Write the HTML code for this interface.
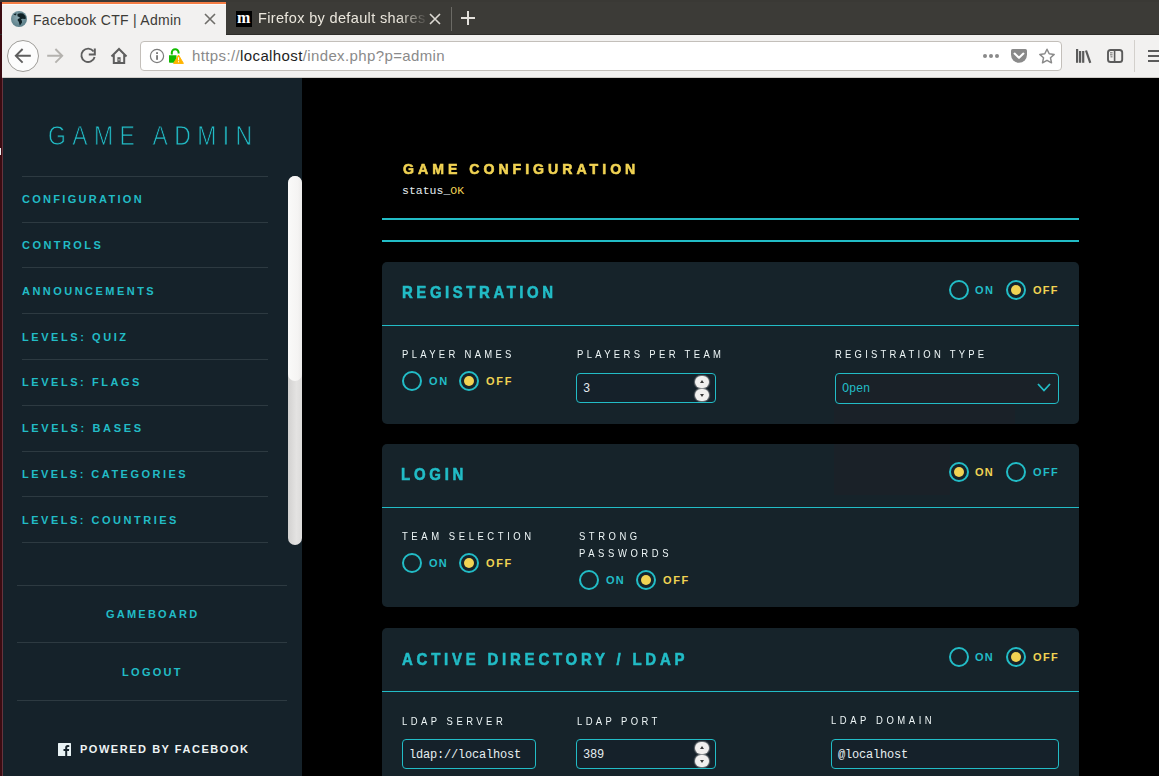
<!DOCTYPE html>
<html><head><meta charset="utf-8"><title>Facebook CTF | Admin</title>
<style>
*{margin:0;padding:0;box-sizing:border-box}
html,body{width:1159px;height:776px;overflow:hidden;background:#000;font-family:"Liberation Sans",sans-serif}
.a{position:absolute}
.t{position:absolute;white-space:nowrap;line-height:1}
/* chrome */
#tabs{left:0;top:0;width:1159px;height:35px;background:#3c3b37}
#navbar{left:0;top:35px;width:1159px;height:43px;background:#f2f1f0;border-bottom:1px solid #cfccc8}
/* sidebar */
#side{left:2px;top:78px;width:300px;height:698px;background:#15222a}
.nl{position:absolute;left:22px;width:246px;height:1px;background:#2d3a41}
.bl{position:absolute;left:17px;width:270px;height:1px;background:#2d3a41}
.nav{position:absolute;left:22px;font-weight:bold;font-size:11px;color:#22bcc6;letter-spacing:2.6px;white-space:nowrap;line-height:1}
.teal{color:#22bcc6}
.yel{color:#f1d353}
.panel{position:absolute;left:382px;width:697px;background:#16232a;border-radius:5px;overflow:hidden}
.ph{position:absolute;left:20px;transform:scaleX(0.88);transform-origin:0 0;-webkit-text-stroke:0.6px #22bcc6;font-weight:bold;font-size:17px;color:#22bcc6;letter-spacing:4px;white-space:nowrap;line-height:1}
.hl{position:absolute;left:0;width:697px;height:1px;background:#22bcc6}
.lab{position:absolute;transform:scaleX(0.86);transform-origin:0 0;font-size:11px;color:#eef6f7;letter-spacing:2.6px;white-space:nowrap;line-height:1}
.rad{position:absolute;width:20px;height:20px;border:2.5px solid #22bcc6;border-radius:50%}
.rad.on::after{content:"";position:absolute;left:2.5px;top:2.5px;width:10px;height:10px;border-radius:50%;background:#f1d353}
.rl{position:absolute;font-weight:bold;font-size:11px;letter-spacing:2px;white-space:nowrap;line-height:1}
.inp{position:absolute;height:30px;border:1px solid #22bcc6;border-radius:4px;background:#15212a}
.mono{font-family:"Liberation Mono",monospace}
.itxt{position:absolute;font-family:"Liberation Mono",monospace;font-size:12px;letter-spacing:-0.2px;color:#e6eef0;white-space:nowrap;line-height:1}
.spin{position:absolute;width:14px;height:12px;border-radius:6px;background:#f1f0ef;box-shadow:0 0 1px 1px rgba(200,200,200,.5)}
.spin.up::after{content:"";position:absolute;left:4.5px;top:4px;border-left:2.5px solid transparent;border-right:2.5px solid transparent;border-bottom:3px solid #3a3a3a}
.spin.dn::after{content:"";position:absolute;left:4.5px;top:4.5px;border-left:2.5px solid transparent;border-right:2.5px solid transparent;border-top:3px solid #3a3a3a}
</style></head><body>
<!-- ============ BROWSER CHROME ============ -->
<div id="tabs" class="a"></div>
<div class="a" style="left:0;top:0;width:1159px;height:2px;background:#3a3935"></div>
<!-- active tab -->
<div class="a" style="left:2px;top:2px;width:224px;height:33px;background:#f2f1f0"></div>
<div class="a" style="left:2px;top:2px;width:224px;height:2px;background:#f47d45"></div>
<div class="a" style="left:2px;top:4px;width:224px;height:1px;background:#fbfbfa"></div>
<!-- navbar -->
<div id="navbar" class="a"></div>
<div class="a" style="left:0;top:2px;width:2px;height:774px;background:#3b0b11"></div>
<!-- tab 1 content -->
<svg class="a" style="left:10px;top:10px" width="18" height="18" viewBox="0 0 18 18">
 <defs><radialGradient id="gg" cx="45%" cy="40%" r="60%"><stop offset="0" stop-color="#8eaab2"/><stop offset="1" stop-color="#5a7e88"/></radialGradient></defs>
 <circle cx="9" cy="9" r="8" fill="url(#gg)"/>
 <path d="M3.5 4.5 Q5 3.2 6.5 3.6 L6 5.2 Q4.6 5.6 3.5 4.5Z" fill="#14282e"/>
 <path d="M7.5 4 Q10 2.6 13 3.6 Q15.8 5.6 16 8.6 Q14.8 9.4 13.2 8.8 Q11.8 8.4 11 9.6 Q12.4 10.4 12 12.6 Q10.8 14.8 9.8 15.4 Q9.2 13.6 8.8 11.8 Q7.4 10.8 7.6 9.4 Q8.6 8.2 10.2 8 Q9.2 6.6 7.5 6.2 Z" fill="#0f2126"/>
</svg>
<div id="tt1" class="t" style="left:33.00px;top:13.00px;font-size:14px;letter-spacing:0.27px;color:#3c3b37">Facebook CTF | Admin</div>
<svg class="a" style="left:204px;top:13px" width="12" height="12" viewBox="0 0 12 12"><path d="M1 1L11 11M11 1L1 11" stroke="#6e6d69" stroke-width="1.6"/></svg>
<!-- tab 2 -->
<div class="a" style="left:236px;top:11px;width:16px;height:16px;background:#000"></div>
<div class="t" style="left:237px;top:10px;font-family:'Liberation Serif',serif;font-weight:bold;font-size:16px;color:#fff;letter-spacing:-0.5px">m</div>
<div id="tt2" class="t" style="left:258px;top:11px;font-size:14.5px;letter-spacing:0.35px;color:#ebe7dd;-webkit-mask-image:linear-gradient(90deg,#000 0,#000 140px,rgba(0,0,0,0.15) 166px)">Firefox by default shares</div>
<svg class="a" style="left:429px;top:13px" width="12" height="12" viewBox="0 0 12 12"><path d="M1 1L11 11M11 1L1 11" stroke="#dcd9d3" stroke-width="1.6"/></svg>
<div class="a" style="left:451px;top:7px;width:1px;height:24px;background:#6b6a65"></div>
<svg class="a" style="left:460px;top:10px" width="16" height="16" viewBox="0 0 16 16"><path d="M8 1V15M1 8H15" stroke="#e4e1dc" stroke-width="2"/></svg>
<div class="a" style="left:0;top:34px;width:1159px;height:1px;background:#2e2d2a"></div>
<div class="a" style="left:2px;top:34px;width:224px;height:1px;background:#f2f1f0"></div>
<!-- nav buttons -->
<svg class="a" style="left:0;top:36px" width="140" height="42" viewBox="0 36 140 42">
 <circle cx="23" cy="56" r="15.5" fill="#fcfcfc" stroke="#9e9c98" stroke-width="1"/>
 <path d="M15.8 55.8H30.8M22.6 49L15.8 55.8L22.6 62.6" fill="none" stroke="#5e5e5e" stroke-width="1.9" stroke-linecap="butt" stroke-linejoin="miter"/>
 <path d="M47.2 55.8H62.2M55.4 49L62.2 55.8L55.4 62.6" fill="none" stroke="#b4b2ae" stroke-width="1.9"/>
 <path d="M93.6 51.5A6.7 6.7 0 1 0 94.6 57" fill="none" stroke="#5e5e5e" stroke-width="1.9"/>
 <path d="M94.8 48.6V54.6H88.8" fill="none" stroke="#5e5e5e" stroke-width="2"/>
 <path d="M111.5 56.5L119 49L126.5 56.5" fill="none" stroke="#5e5e5e" stroke-width="2"/>
 <path d="M113.8 55V63H124.2V55" fill="none" stroke="#5e5e5e" stroke-width="2"/>
 <rect x="117.4" y="57.2" width="3.2" height="5.8" fill="#5e5e5e"/><rect x="118.5" y="59" width="1" height="1.6" fill="#ddd"/>
</svg>
<!-- url box -->
<div class="a" style="left:140px;top:41px;width:922px;height:30px;background:#fff;border:1px solid #c3bfba;border-radius:4px"></div>
<svg class="a" style="left:140px;top:40px" width="50" height="32" viewBox="140 40 50 32">
 <circle cx="157" cy="56" r="6.6" fill="none" stroke="#7c7c7c" stroke-width="1.2"/>
 <rect x="156.1" y="52.2" width="1.9" height="1.8" fill="#7c7c7c"/>
 <rect x="156.1" y="55.2" width="1.9" height="4.6" fill="#7c7c7c"/>
 <path d="M171.8 54.5V52.6A3.4 3.4 0 0 1 178.6 52.6V53.4" fill="none" stroke="#12bc00" stroke-width="2"/>
 <path d="M169 55.2H176.5V62.8H169.8A0.8 0.8 0 0 1 169 62Z" fill="#12bc00"/>
 <path d="M178.5 55L183.4 63.4H173.6Z" fill="#ffb400" stroke="#ffb400" stroke-width="1" stroke-linejoin="round"/>
 <rect x="178" y="57.3" width="1.1" height="3" fill="#fff"/>
 <rect x="178" y="61.2" width="1.1" height="1.1" fill="#fff"/>
</svg>
<div id="url" class="t" style="left:192.00px;top:48.00px;font-size:15px;letter-spacing:0.38px;color:#8a8a8a">https://<span style="color:#1e1e1e">localhost</span>/index.php?p=admin</div>
<svg class="a" style="left:975px;top:40px" width="184" height="38" viewBox="975 40 184 38">
 <circle cx="985" cy="56" r="2" fill="#8a8a8a"/><circle cx="991" cy="56" r="2" fill="#8a8a8a"/><circle cx="997" cy="56" r="2" fill="#8a8a8a"/>
 <path d="M1011 50.5A1.6 1.6 0 0 1 1012.6 48.9H1025.4A1.6 1.6 0 0 1 1027 50.5V54.8A8 8 0 0 1 1011 54.8Z" fill="#8a8a8a"/>
 <path d="M1014.6 53.6L1019 57.8L1023.4 53.6" fill="none" stroke="#fff" stroke-width="2.1" stroke-linecap="round" stroke-linejoin="round"/>
 <path d="M1047 49.2L1049.2 53.8L1054.2 54.4L1050.5 57.8L1051.5 62.8L1047 60.3L1042.5 62.8L1043.5 57.8L1039.8 54.4L1044.8 53.8Z" fill="none" stroke="#8a8a8a" stroke-width="1.5" stroke-linejoin="round"/>
 <rect x="1076" y="49" width="2.2" height="13.8" fill="#5b5b5b"/>
 <rect x="1079" y="51" width="2.2" height="11.8" fill="#5b5b5b"/>
 <rect x="1082.1" y="51" width="2.2" height="11.8" fill="#5b5b5b"/>
 <path d="M1086 50.5L1090.3 62.8" stroke="#5b5b5b" stroke-width="2.2"/>
 <rect x="1108" y="50" width="14.2" height="12" rx="2.6" fill="none" stroke="#5b5b5b" stroke-width="1.9"/>
 <rect x="1113.8" y="50" width="1.6" height="12" fill="#5b5b5b"/>
 <rect x="1110" y="52.4" width="2.6" height="0.9" fill="#5b5b5b"/>
 <rect x="1110" y="54.4" width="2.6" height="0.9" fill="#5b5b5b"/>
 <rect x="1110.5" y="56.4" width="2" height="0.9" fill="#5b5b5b"/>
 <rect x="1134" y="40" width="1" height="32" fill="#d3d0cc"/>
 <rect x="1148" y="50" width="12" height="2" fill="#5b5b5b"/>
 <rect x="1148" y="55" width="12" height="2" fill="#5b5b5b"/>
 <rect x="1148" y="60" width="12" height="2" fill="#5b5b5b"/>
</svg>

<!-- ============ SIDEBAR ============ -->
<div class="a" style="left:0;top:78px;width:2px;height:698px;background:#3b0c12"></div>
<div id="side" class="a"></div>
<div class="a" style="left:2px;top:78px;width:1px;height:698px;background:#7a3a44;opacity:.8"></div>
<div class="a" style="left:0;top:148px;width:1px;height:7px;background:#f0f0f0"></div>

<div id="sgame" class="t" style="left:48.00px;top:123.00px;letter-spacing:7.50px;font-size:27px;color:#22bcc6;transform:scaleX(0.85);transform-origin:0 0;-webkit-text-stroke:0.8px #15222a">GAME ADMIN</div>
<div class="nl" style="top:176px"></div>
<div id="n1" class="nav" style="left:22.00px;top:194.00px;letter-spacing:2.30px">CONFIGURATION</div>
<div class="nl" style="top:222px"></div>
<div id="n2" class="nav" style="left:22.00px;top:240.00px;letter-spacing:2.44px">CONTROLS</div>
<div class="nl" style="top:267px"></div>
<div id="n3" class="nav" style="left:22.00px;top:286.00px;letter-spacing:2.47px">ANNOUNCEMENTS</div>
<div class="nl" style="top:313px"></div>
<div id="n4" class="nav" style="left:22.00px;top:332.00px;letter-spacing:2.57px">LEVELS: QUIZ</div>
<div class="nl" style="top:359px"></div>
<div id="n5" class="nav" style="left:22.00px;top:377.00px;letter-spacing:2.55px">LEVELS: FLAGS</div>
<div class="nl" style="top:405px"></div>
<div id="n6" class="nav" style="left:22.00px;top:423.00px;letter-spacing:2.63px">LEVELS: BASES</div>
<div class="nl" style="top:451px"></div>
<div id="n7" class="nav" style="left:22.00px;top:469.00px;letter-spacing:2.48px">LEVELS: CATEGORIES</div>
<div class="nl" style="top:496px"></div>
<div id="n8" class="nav" style="left:22.00px;top:515.00px;letter-spacing:2.51px">LEVELS: COUNTRIES</div>
<div class="nl" style="top:542px"></div>
<!-- scrollbar -->
<div class="a" style="left:288px;top:176px;width:14px;height:369px;border-radius:7px;background:linear-gradient(90deg,#d2d1d0,#e4e3e2 60%,#dcdbda)"></div>
<div class="a" style="left:288px;top:176px;width:14px;height:205px;border-radius:7px;background:linear-gradient(90deg,#fafaf9,#f5f4f3 70%,#ecebea)"></div>
<div class="bl" style="top:585px"></div>
<div id="gb" class="nav" style="left:106.00px;top:609.00px;letter-spacing:2.22px">GAMEBOARD</div>
<div class="bl" style="top:642px"></div>
<div id="lo" class="nav" style="left:122.00px;top:667.00px;letter-spacing:2.30px">LOGOUT</div>
<div class="bl" style="top:700px"></div>
<svg class="a" style="left:58px;top:743px" width="13" height="13" viewBox="0 0 13 13"><path d="M0.6 0H12.4A0.6 0.6 0 0 1 13 0.6V12.4A0.6 0.6 0 0 1 12.4 13H9.2V8H10.9L11.2 6H9.2V4.8Q9.2 4 10 4H11.3V2.2Q10.6 2.1 9.7 2.1Q7.2 2.1 7.2 4.6V6H5.5V8H7.2V13H0.6A0.6 0.6 0 0 1 0 12.4V0.6A0.6 0.6 0 0 1 0.6 0Z" fill="#e8f2f4"/></svg>
<div id="pw" class="nav" style="left:80.00px;top:744.00px;letter-spacing:1.53px;color:#eef4f5">POWERED BY FACEBOOK</div>

<!-- ============ MAIN ============ -->
<div id="gc" class="t yel" style="transform:scaleX(0.94);transform-origin:0 0;-webkit-text-stroke:0.6px #f1d353;left:403.00px;top:161.00px;letter-spacing:4.26px;font-weight:bold;font-size:15px">GAME CONFIGURATION</div>
<div class="t mono" style="left:402px;top:185px;font-size:11.5px;color:#e6eef0">status_<span class="yel">OK</span></div>
<div class="a" style="left:382px;top:218px;width:697px;height:2px;background:#22bcc6"></div>
<div class="a" style="left:382px;top:240px;width:697px;height:2px;background:#22bcc6"></div>

<!-- panel registration -->
<div class="panel" style="top:262px;height:162px">
  <div id="h1" class="ph" style="left:20.00px;top:22.00px;letter-spacing:4.04px">REGISTRATION</div>
  <div class="rad" style="left:567px;top:18px"></div>
  <div id="r1on" class="rl teal" style="left:593.00px;top:23.00px;letter-spacing:1.40px">ON</div>
  <div class="rad on" style="left:624px;top:18px"></div>
  <div id="r1off" class="rl yel" style="left:651.00px;top:23.00px;letter-spacing:1.20px">OFF</div>
  <div class="hl" style="top:63px"></div>
  <div id="l1" class="lab" style="left:20.00px;top:87.00px;letter-spacing:3.86px">PLAYER NAMES</div>
  <div class="rad" style="left:20px;top:109px"></div>
  <div id="r2on" class="rl teal" style="left:47.00px;top:114.00px;letter-spacing:1.60px">ON</div>
  <div class="rad on" style="left:77px;top:109px"></div>
  <div id="r2off" class="rl yel" style="left:104.00px;top:114.00px;letter-spacing:1.70px">OFF</div>
  <div id="l2" class="lab" style="left:195.00px;top:87.00px;letter-spacing:3.89px">PLAYERS PER TEAM</div>
  <div class="inp" style="left:194px;top:111px;width:140px"></div>
  <div class="itxt" style="left:201px;top:121px">3</div>
  <div class="spin up" style="left:313px;top:114px"></div>
  <div class="spin dn" style="left:313px;top:127px"></div>
  <div class="a" style="left:452px;top:142px;width:181px;height:20px;background:#1a2128"></div>
  <div id="l3" class="lab" style="left:453.00px;top:87.00px;letter-spacing:3.75px">REGISTRATION TYPE</div>
  <div class="inp" style="left:453px;top:111px;width:224px;height:31px;background:#1a2128"></div>
  <div id="open" class="itxt" style="left:460px;top:121px;color:#22bcc6">Open</div>
  <svg class="a" style="left:655px;top:121px" width="14" height="9" viewBox="0 0 14 9"><path d="M1 1 L7 7.5 L13 1" fill="none" stroke="#22bcc6" stroke-width="1.8"/></svg>
</div>

<!-- panel login -->
<div class="panel" style="top:444px;height:163px">
  <div class="a" style="left:452px;top:0;width:116px;height:51px;background:#1a2128"></div>
  <div id="h2" class="ph" style="left:19.00px;top:22.00px;letter-spacing:4.25px">LOGIN</div>
  <div class="rad on" style="left:567px;top:18px"></div>
  <div class="rl yel" style="left:593px;top:23px;letter-spacing:1.20px">ON</div>
  <div class="rad" style="left:624px;top:18px"></div>
  <div class="rl teal" style="left:651px;top:23px;letter-spacing:1.35px">OFF</div>
  <div class="hl" style="top:63px"></div>
  <div id="l4" class="lab" style="left:20.00px;top:87.00px;letter-spacing:4.17px">TEAM SELECTION</div>
  <div class="rad" style="left:20px;top:109px"></div>
  <div class="rl teal" style="left:47px;top:114px;letter-spacing:1.30px">ON</div>
  <div class="rad on" style="left:77px;top:109px"></div>
  <div class="rl yel" style="left:104px;top:114px;letter-spacing:1.60px">OFF</div>
  <div id="l5" class="lab" style="left:197.00px;top:87.00px;letter-spacing:4.10px">STRONG</div>
  <div id="l6" class="lab" style="left:197.00px;top:104.00px;letter-spacing:4.17px">PASSWORDS</div>
  <div class="rad" style="left:197px;top:126px"></div>
  <div class="rl teal" style="left:224px;top:131px;letter-spacing:1.30px">ON</div>
  <div class="rad on" style="left:254px;top:126px"></div>
  <div class="rl yel" style="left:281px;top:131px;letter-spacing:1.60px">OFF</div>
</div>

<!-- panel ldap -->
<div class="panel" style="top:628px;height:160px">
  <div id="h3" class="ph" style="left:20.00px;top:23.00px;letter-spacing:4.30px">ACTIVE DIRECTORY / LDAP</div>
  <div class="rad" style="left:567px;top:19px"></div>
  <div class="rl teal" style="left:593px;top:24px;letter-spacing:1.20px">ON</div>
  <div class="rad on" style="left:624px;top:19px"></div>
  <div class="rl yel" style="left:651px;top:24px;letter-spacing:1.35px">OFF</div>
  <div class="hl" style="top:63px"></div>
  <div id="l7" class="lab" style="left:20.00px;top:88.00px;letter-spacing:4.05px">LDAP SERVER</div>
  <div class="inp" style="left:20px;top:111px;width:134px"></div>
  <div class="itxt" style="left:27px;top:121px">ldap://localhost</div>
  <div id="l8" class="lab" style="left:195.00px;top:88.00px;letter-spacing:3.94px">LDAP PORT</div>
  <div class="inp" style="left:194px;top:111px;width:140px"></div>
  <div class="itxt" style="left:201px;top:121px">389</div>
  <div class="spin up" style="left:313px;top:114px"></div>
  <div class="spin dn" style="left:313px;top:127px"></div>
  <div id="l9" class="lab" style="left:449.00px;top:87.00px;letter-spacing:4.15px">LDAP DOMAIN</div>
  <div class="inp" style="left:449px;top:111px;width:228px"></div>
  <div class="itxt" style="left:456px;top:121px">@localhost</div>
</div>
</body></html>
